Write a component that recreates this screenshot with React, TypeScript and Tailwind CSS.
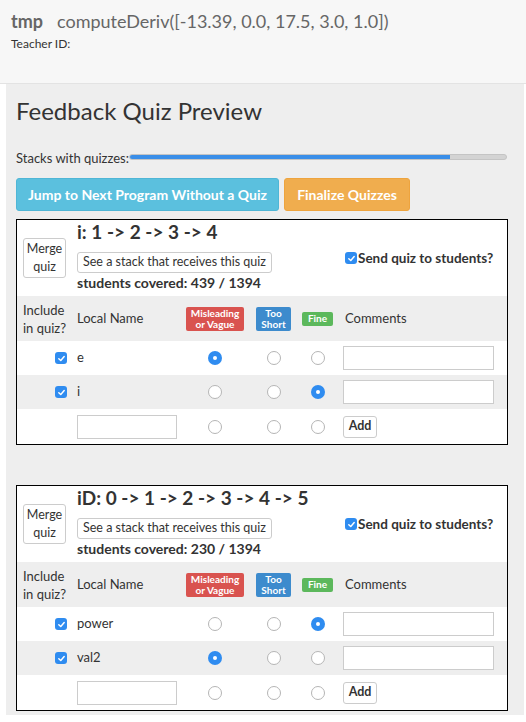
import React from 'react';

type Row = { name: string; pick: number };

const Check = () => (
  <span className="inline-flex w-[12px] h-[12px] rounded-[3px] bg-[#2f8cf0] items-center justify-center">
    <svg width="9" height="9" viewBox="0 0 10 10">
      <path d="M2 5.2 L4.2 7.3 L8 2.8" fill="none" stroke="#fff" strokeWidth="1.6" strokeLinecap="round" strokeLinejoin="round" />
    </svg>
  </span>
);

const Radio = ({ on }: { on: boolean }) =>
  on ? (
    <span className="inline-flex w-[14px] h-[14px] rounded-full bg-[#2f8cf0] items-center justify-center">
      <span className="w-[4px] h-[4px] rounded-full bg-white" />
    </span>
  ) : (
    <span className="inline-block w-[14px] h-[14px] rounded-full border border-[#b5b5b5] bg-white" />
  );

const cols = 'grid grid-cols-[55px_108px_70px_47px_41px_1fr] items-center';

const QuizBox = ({ title, covered, rows }: { title: string; covered: string; rows: Row[] }) => (
  <div className="border border-black bg-white">
    <div className="flex h-[76px] items-center">
      <div className="w-[60px] pl-[6px] pr-[5px]">
        <div className="border border-[#ccc] rounded-[3px] h-[40px] w-[43px] flex flex-col items-center justify-center text-[12.5px] leading-[18px] text-[#333]">
          <span>Merge</span>
          <span>quiz</span>
        </div>
      </div>
      <div className="flex flex-col w-[268px] self-start">
        <span className="text-[19px] font-bold leading-[24px] text-[#333]">{title}</span>
        <span className="mt-[8px] border border-[#ccc] rounded-[3px] w-[195px] h-[21px] flex items-center justify-center text-[12.5px] text-[#333]">
          See a stack that receives this quiz
        </span>
        <span className="mt-[1px] text-[14px] font-bold leading-[18px] text-[#333]">students covered: {covered}</span>
      </div>
      <div className="flex items-center gap-[1px] text-[13.5px] font-bold text-[#333]">
        <Check />
        <span>Send quiz to students?</span>
      </div>
    </div>
    <div className={`${cols} h-[45px] bg-[#eeeeee] text-[13px] text-[#333]`}>
      <div className="pl-[6px] leading-[18px]">Include in quiz?</div>
      <div className="pl-[5px]">Local Name</div>
      <div className="flex justify-center">
        <span className="bg-[#d9534f] text-white text-[10px] font-bold leading-[11px] rounded-[2px] w-[58px] h-[24px] flex flex-col items-center justify-center">
          <span>Misleading</span>
          <span>or Vague</span>
        </span>
      </div>
      <div className="flex justify-center">
        <span className="bg-[#3d8bcd] text-white text-[10px] font-bold leading-[11px] rounded-[2px] w-[35px] h-[24px] flex flex-col items-center justify-center">
          <span>Too</span>
          <span>Short</span>
        </span>
      </div>
      <div className="flex justify-center">
        <span className="bg-[#5cb85c] text-white text-[10px] font-bold rounded-[2px] w-[31px] h-[14px] flex items-center justify-center">Fine</span>
      </div>
      <div className="pl-[7px]">Comments</div>
    </div>
    {rows.map((r, i) => (
      <div key={r.name} className={`${cols} h-[34px] text-[13px] text-[#333] ${i % 2 ? 'bg-[#eeeeee]' : 'bg-white'}`}>
        <div className="flex justify-end pr-[5px]">
          <Check />
        </div>
        <div className="pl-[5px]">{r.name}</div>
        {[0, 1, 2].map((k) => (
          <div key={k} className="flex justify-center">
            <Radio on={r.pick === k} />
          </div>
        ))}
        <div className="pl-[5px]">
          <div className="w-[151px] h-[24px] border border-[#ccc] bg-white" />
        </div>
      </div>
    ))}
    <div className={`${cols} h-[35px] text-[13px] text-[#333]`}>
      <div />
      <div className="pl-[5px]">
        <div className="w-[100px] h-[24px] border border-[#ccc]" />
      </div>
      {[0, 1, 2].map((k) => (
        <div key={k} className="flex justify-center">
          <Radio on={false} />
        </div>
      ))}
      <div className="pl-[5px]">
        <span className="inline-flex items-center justify-center w-[34px] h-[22px] border border-[#ccc] rounded-[3px] text-[12.5px] font-bold">Add</span>
      </div>
    </div>
  </div>
);

export default function App() {
  return (
    <div className="w-[526px] h-[722px] bg-white font-['Lato',sans-serif] overflow-hidden">
      <div className="h-[84px] bg-[#f7f7f7] border-b border-[#e3e3e3] px-[11px] pt-[9px]">
        <div className="flex items-baseline gap-[14px] text-[18px] text-[#666] leading-[24px]">
          <span className="font-bold">tmp</span>
          <span>computeDeriv([-13.39, 0.0, 17.5, 3.0, 1.0])</span>
        </div>
        <div className="text-[12px] text-[#333] mt-[2px]">Teacher ID:</div>
      </div>
      <div className="ml-[6px] w-[518px] bg-[#eeeeee] pl-[10px] pr-[16px] pb-[4px]">
        <h1 className="text-[24px] text-[#333] leading-[32px] pt-[11px]">Feedback Quiz Preview</h1>
        <div className="flex items-center h-[16px] mt-[24px] text-[13px] text-[#333]">
          <span>Stacks with quizzes:</span>
          <div className="flex-1 mr-[1px] h-[6px] rounded-full bg-[#d3d3d3] border border-[#c4c4c4] overflow-hidden -mt-[4px]">
            <div className="h-full bg-[#3a8ee8] w-[85%]" />
          </div>
        </div>
        <div className="flex gap-[5px] mt-[11px]">
          <span className="h-[33px] w-[263px] rounded-[3px] bg-[#5bc0de] border border-[#4fb6d6] text-white font-bold text-[14px] flex items-center justify-center">
            Jump to Next Program Without a Quiz
          </span>
          <span className="h-[33px] w-[126px] rounded-[3px] bg-[#f0ad4e] border border-[#eea43e] text-white font-bold text-[14px] flex items-center justify-center">
            Finalize Quizzes
          </span>
        </div>
        <div className="mt-[8px]">
          <QuizBox
            title="i: 1 -> 2 -> 3 -> 4"
            covered="439 / 1394"
            rows={[
              { name: 'e', pick: 0 },
              { name: 'i', pick: 2 },
            ]}
          />
        </div>
        <div className="mt-[40px]">
          <QuizBox
            title="iD: 0 -> 1 -> 2 -> 3 -> 4 -> 5"
            covered="230 / 1394"
            rows={[
              { name: 'power', pick: 2 },
              { name: 'val2', pick: 0 },
            ]}
          />
        </div>
      </div>
    </div>
  );
}
